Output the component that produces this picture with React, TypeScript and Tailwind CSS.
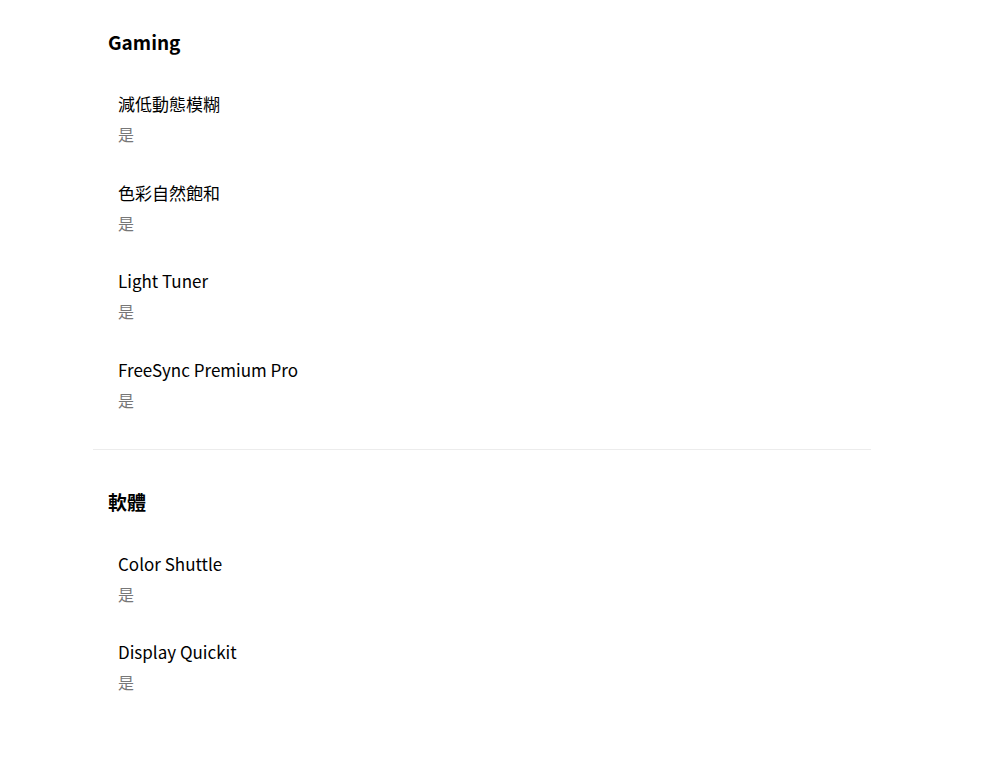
const sections = [
	{
		title: "Gaming",
		items: ["減低動態模糊", "色彩自然飽和", "Light Tuner", "FreeSync Premium Pro"],
	},
	{
		title: "軟體",
		items: ["Color Shuttle", "Display Quickit"],
	},
];

export default function App() {
	return (
		<main
			className="min-h-[758px] bg-white text-black"
			style={{ fontFamily: '"Noto Sans CJK TC", "Noto Sans", sans-serif' }}
		>
			<div className="ml-[93px] w-[778px]">
				{sections.map((section, i) => (
					<section
						key={section.title}
						className={`pb-[37px] ${i === 0 ? "pt-[27px] border-b border-[#ececec]" : "pt-[37px]"}`}
					>
						<h2 className="pl-[15px] text-[19px] font-bold leading-[30px]">{section.title}</h2>
						<div className="mt-[34px] flex flex-col gap-[33.5px] pl-[25px]">
							{section.items.map((item) => (
								<div key={item}>
									<p className="text-[17px] font-normal leading-[26px]">{item}</p>
									<p className="mt-[5px] text-[16px] leading-[24px] text-[#777777]">是</p>
								</div>
							))}
						</div>
					</section>
				))}
			</div>
		</main>
	);
}
